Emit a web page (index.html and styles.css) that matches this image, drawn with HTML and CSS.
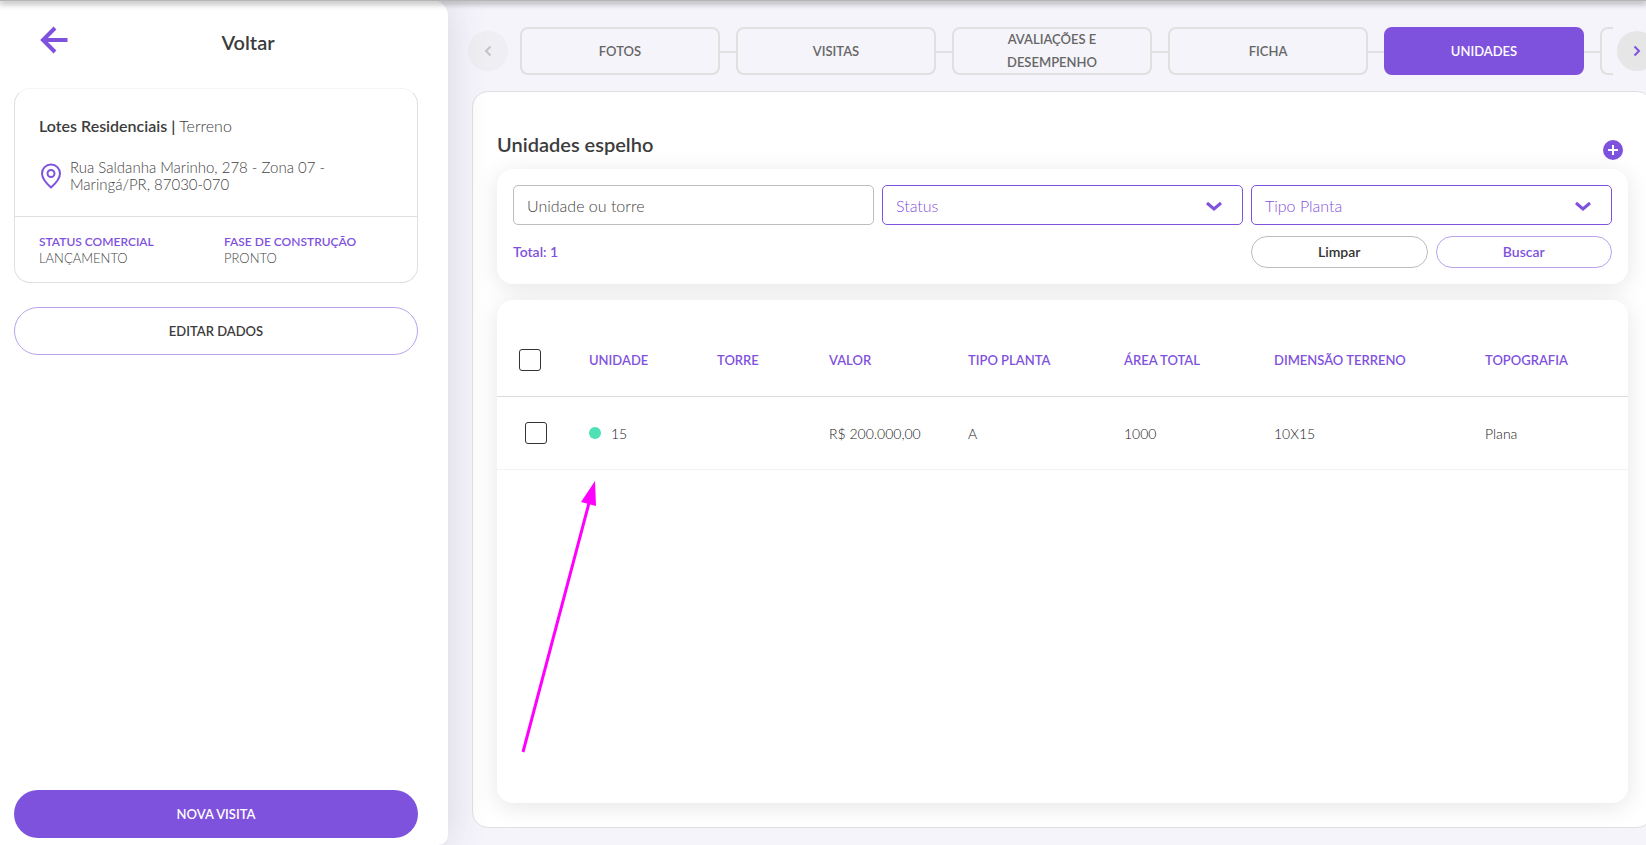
FILE: index.html
```html
<!DOCTYPE html>
<html lang="pt-BR">
<head>
  <meta charset="UTF-8">
  <meta name="viewport" content="width=device-width, initial-scale=1.0">
  <title>Unidades espelho</title>
  <link rel="stylesheet" href="styles.css">
</head>
<body>
  <div class="topbar"></div>
  <div class="page">
    <aside class="sidebar">
      <div class="back">
        <a class="back-link" href="#" aria-label="Voltar">
          <svg width="28" height="28" viewBox="0 0 28 28" fill="none" stroke="#7f52dd" stroke-width="4">
            <path d="M27.500 14H4M15 2L3 14l12 12" />
          </svg>
        </a>
        <h1 class="back-title">Voltar</h1>
      </div>
      <section class="property">
        <div class="property-info">
          <h2 class="property-name">Lotes Residenciais | <span class="light">Terreno</span></h2>
          <div class="address">
            <svg class="pin" width="22" height="26" viewBox="0 0 22 26" fill="none" stroke="#7f52dd" stroke-width="2">
              <path d="M11 24.500C7 21 2 16 2 10.500a9 9 0 0 1 18 0C20 16 15 21 11 24.500z" />
              <circle cx="11" cy="10.500" r="3.500" />
            </svg>
            <p class="address-text">Rua Saldanha Marinho, 278 - Zona 07 -<br>Maringá/PR, 87030-070</p>
          </div>
        </div>
        <dl class="property-status">
          <div class="status-item">
            <dt>STATUS COMERCIAL</dt>
            <dd>LANÇAMENTO</dd>
          </div>
          <div class="status-item">
            <dt>FASE DE CONSTRUÇÃO</dt>
            <dd>PRONTO</dd>
          </div>
        </dl>
      </section>
      <button class="btn btn-edit" type="button">EDITAR DADOS</button>
      <button class="btn btn-visit" type="button">NOVA VISITA</button>
    </aside>

    <main class="main">
      <nav class="tabs">
        <button class="tabs-arrow" type="button" aria-label="Anterior" disabled>
          <svg width="8" height="12" viewBox="0 0 8 12" fill="none" stroke="#c4c4c4" stroke-width="2"><path d="M6.500 1.500L2 6l4.500 4.500" /></svg>
        </button>
        <div class="tabs-list">
          <a class="tab" href="#">FOTOS</a>
          <a class="tab" href="#">VISITAS</a>
          <a class="tab" href="#">AVALIAÇÕES E DESEMPENHO</a>
          <a class="tab" href="#">FICHA</a>
          <a class="tab active" href="#">UNIDADES</a>
          <a class="tab" href="#" aria-hidden="true"></a>
        </div>
        <button class="tabs-arrow next" type="button" aria-label="Próximo">
          <svg width="8" height="12" viewBox="0 0 8 12" fill="none" stroke="#7f52dd" stroke-width="2"><path d="M1.500 1.500L6 6l-4.500 4.500" /></svg>
        </button>
      </nav>

      <section class="panel">
        <div class="panel-head">
          <h2 class="panel-title">Unidades espelho</h2>
          <button class="add" type="button" aria-label="Adicionar unidade">
            <svg width="20" height="20" viewBox="0 0 20 20"><circle cx="10" cy="10" r="10" fill="#7f52dd" /><path d="M10 5v10M5 10h10" stroke="#fff" stroke-width="2" /></svg>
          </button>
        </div>

        <form class="filters">
          <div class="fields">
            <input class="field" type="text" placeholder="Unidade ou torre" aria-label="Unidade ou torre">
            <div class="select">
              <select class="field field-select" aria-label="Status">
                <option>Status</option>
              </select>
              <svg class="chevron" width="18" height="12" viewBox="0 0 18 12" fill="none" stroke="#7f52dd" stroke-width="3"><path d="M2 2l7 6 7-6" /></svg>
            </div>
            <div class="select">
              <select class="field field-select" aria-label="Tipo Planta">
                <option>Tipo Planta</option>
              </select>
              <svg class="chevron" width="18" height="12" viewBox="0 0 18 12" fill="none" stroke="#7f52dd" stroke-width="3"><path d="M2 2l7 6 7-6" /></svg>
            </div>
          </div>
          <div class="fields">
            <p class="total">Total: 1</p>
            <div class="actions">
              <button class="action" type="reset">Limpar</button>
              <button class="action search" type="button">Buscar</button>
            </div>
          </div>
        </form>

        <div class="units">
          <table class="table">
            <colgroup>
              <col class="col-check">
              <col class="col-unit">
              <col class="col-tower">
              <col class="col-value">
              <col class="col-plan">
              <col class="col-area">
              <col class="col-size">
              <col>
            </colgroup>
            <thead>
              <tr>
                <th><input class="check" type="checkbox" aria-label="Selecionar todas"></th>
                <th>UNIDADE</th>
                <th>TORRE</th>
                <th>VALOR</th>
                <th>TIPO PLANTA</th>
                <th>ÁREA TOTAL</th>
                <th>DIMENSÃO TERRENO</th>
                <th>TOPOGRAFIA</th>
              </tr>
            </thead>
            <tbody>
              <tr>
                <td><input class="check" type="checkbox" aria-label="Selecionar unidade 15"></td>
                <td><span class="dot"></span>15</td>
                <td></td>
                <td>R$ 200.000,00</td>
                <td>A</td>
                <td>1000</td>
                <td>10X15</td>
                <td>Plana</td>
              </tr>
            </tbody>
          </table>
          <svg class="pointer" width="80" height="276" viewBox="0 0 80 276">
            <path d="M4 271L70 22" stroke="#f0f" stroke-width="3" />
            <path d="M76 0L62 21l15 4z" fill="#f0f" />
          </svg>
        </div>
      </section>
    </main>
  </div>
</body>
</html>
```
FILE: styles.css
```css
* {
  box-sizing: border-box;
}
body {
  margin: 0;
  font-family: "Lato", "Liberation Sans", sans-serif;
  font-size: 14px;
  color: #3c3c3c;
  background-color: #f5f4fb;
  overflow: hidden;
}
h1, h2, p, dl, dd {
  margin: 0;
}
button, input, select {
  font-family: inherit;
}
button {
  cursor: pointer;
}
a {
  color: inherit;
  text-decoration: none;
}
svg {
  display: block;
}
.topbar {
  position: absolute;
  top: 0;
  left: 0;
  right: 0;
  height: 1px;
  background-color: #b5b5b5;
  box-shadow: 0 1px 6px 1px rgba(0, 0, 0, 0.5);
  z-index: 2;
}
.page {
  display: flex;
  height: 100vh;
}

/* sidebar */
.sidebar {
  display: flex;
  flex-direction: column;
  flex: 0 0 448px;
  padding: 26px 30px 7px 14px;
  background-color: #fff;
  border-radius: 0 16px 10px 0;
  box-shadow: 0 0 40px rgba(60, 50, 90, 0.16);
  z-index: 1;
}
.back {
  display: grid;
  grid-template-columns: 64px 1fr;
  height: 62px;
}
.back-link {
  padding-left: 26px;
}
.back-title {
  padding-top: 4px;
  font-size: 20px;
  line-height: 24px;
  font-weight: 600;
  text-align: center;
}
.property {
  border: 1px solid #e2dfe2;
  border-top-color: #f5f3f5;
  border-radius: 16px;
}
.property-info {
  padding: 23px 24px;
  border-bottom: 1px solid #e2dfe2;
}
.property-name {
  font-size: 16px;
  line-height: 28px;
  font-weight: 600;
}
.light {
  font-weight: 300;
}
.address {
  display: flex;
  align-items: center;
  gap: 8px;
  margin-top: 19px;
  padding-left: 1px;
}
.address-text {
  color: #444;
  font-size: 15px;
  font-weight: 300;
  line-height: 17px;
}
.property-status {
  display: grid;
  grid-template-columns: 1fr 1fr;
  gap: 16px;
  padding: 16px 24px 15px;
  font-size: 13px;
  font-weight: 300;
  line-height: 17px;
  color: #444;
}
.property-status dt {
  color: #7f52dd;
  font-size: 12px;
  font-weight: 600;
}
.btn {
  height: 48px;
  flex-shrink: 0;
  border-radius: 24px;
  font-size: 13px;
  font-weight: 600;
}
.btn-edit {
  margin-top: 24px;
  border: 1px solid #bba3ee;
  background-color: #fff;
  color: #3c3c3c;
}
.btn-visit {
  margin-top: auto;
  border: none;
  background-color: #7f52dd;
  color: #fff;
}

/* tabs */
.main {
  display: flex;
  flex-direction: column;
  flex: 1;
  min-width: 0;
  padding: 27px 0 17px 24px;
  overflow: hidden;
}
.tabs {
  display: flex;
  align-items: center;
  margin: 0 -11px 16px -4px;
}
.tabs-arrow {
  display: flex;
  align-items: center;
  justify-content: center;
  flex: 0 0 40px;
  height: 40px;
  padding: 0;
  border: none;
  border-radius: 50%;
  background-color: #efeef2;
}
.tabs-arrow.next {
  background-color: #e6e6e6;
}
.tabs-list {
  display: flex;
  flex: 1;
  min-width: 0;
  margin: 0 4px 0 12px;
  overflow: hidden;
}
.tab {
  display: flex;
  align-items: center;
  justify-content: center;
  position: relative;
  flex: 0 0 200px;
  height: 48px;
  margin-right: 16px;
  padding: 0 40px;
  border: 2px solid #e0e0e0;
  border-radius: 8px;
  font-size: 13px;
  line-height: 23px;
  font-weight: 600;
  text-align: center;
  color: #666;
}
.tab + .tab::before {
  content: "";
  position: absolute;
  top: 22px;
  left: -18px;
  width: 16px;
  height: 2px;
  background-color: #e0e0e0;
}
.tab.active {
  border-color: #7f52dd;
  background-color: #7f52dd;
  color: #fff;
}

/* units panel */
.panel {
  display: flex;
  flex-direction: column;
  flex: 1;
  margin-right: -7px;
  padding: 38px 24px 24px;
  border: 1px solid #e0dfe2;
  border-radius: 16px;
  background-color: #fff;
}
.panel-head {
  display: flex;
  align-items: flex-start;
  justify-content: space-between;
  height: 39px;
  padding-right: 5px;
}
.panel-title {
  font-size: 20px;
  line-height: 28px;
  font-weight: 600;
}
.add {
  margin-top: 10px;
  padding: 0;
  border: none;
  background: none;
}
.filters,
.units {
  border-radius: 16px;
  background-color: #fff;
  box-shadow: 0 4px 24px rgba(0, 0, 0, 0.1);
}
.filters {
  padding: 16px;
}
.fields {
  display: grid;
  grid-template-columns: repeat(3, 1fr);
  gap: 8px;
}
.field {
  width: 100%;
  height: 40px;
  padding: 0 13px;
  border: 1px solid #bdbdbd;
  border-radius: 5px;
  background-color: #fff;
  font-size: 16px;
  font-weight: 300;
  color: #444;
}
.field::placeholder {
  color: #444;
}
.select {
  position: relative;
}
.field-select {
  appearance: none;
  border-color: #7f52dd;
  color: #7f52dd;
}
.chevron {
  position: absolute;
  top: 16px;
  right: 20px;
  pointer-events: none;
}
.total {
  margin-top: 11px;
  line-height: 32px;
  font-weight: 600;
  color: #7f52dd;
}
.actions {
  display: flex;
  gap: 8px;
  grid-column: 3;
  margin-top: 11px;
}
.action {
  flex: 1;
  height: 32px;
  padding: 0 6px 2px;
  border: 1px solid #bdbdbd;
  border-radius: 16px;
  background-color: #fff;
  font-size: 14px;
  font-weight: 600;
  color: #333;
}
.search {
  border-color: #bba3ee;
  color: #7f52dd;
}
.units {
  position: relative;
  flex: 1;
  margin-top: 16px;
  padding-top: 24px;
}
.table {
  width: 100%;
  table-layout: fixed;
  border-collapse: separate;
  border-spacing: 0;
  text-align: left;
}
.table th,
.table td {
  height: 73px;
  padding: 0 0 0 16px;
  border-bottom: 1px solid #dcdcdc;
}
.table th {
  font-size: 13px;
  font-weight: 600;
  color: #7f52dd;
}
.table td {
  border-bottom-color: #f3f3f3;
  font-weight: 300;
  color: #222;
}
.table th:first-child {
  padding-left: 22px;
}
.table td:first-child {
  padding-left: 28px;
}
.col-check {
  width: 76px;
}
.col-unit {
  width: 128px;
}
.col-tower {
  width: 112px;
}
.col-value {
  width: 139px;
}
.col-plan {
  width: 156px;
}
.col-area {
  width: 150px;
}
.col-size {
  width: 211px;
}
.check {
  appearance: none;
  display: block;
  width: 22px;
  height: 22px;
  margin: 0;
  border: 1px solid #333;
  border-radius: 3px;
  background-color: #fff;
}
.dot {
  display: inline-block;
  width: 12px;
  height: 12px;
  margin-right: 10px;
  border-radius: 50%;
  background-color: #50e0b5;
}
.pointer {
  position: absolute;
  top: 181px;
  left: 22px;
}
```
